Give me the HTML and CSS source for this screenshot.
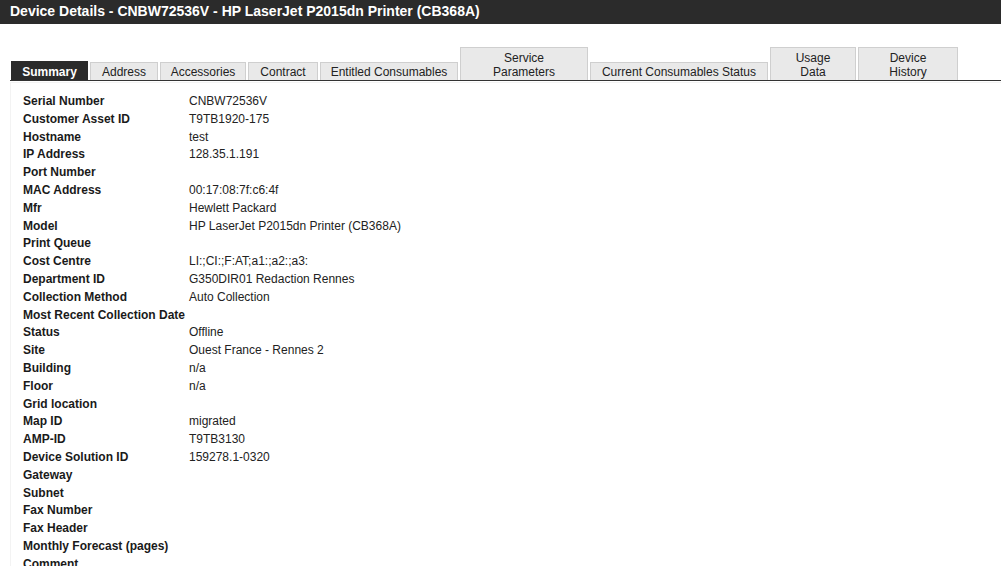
FILE: index.html
```html
<!DOCTYPE html>
<html>
<head>
<meta charset="utf-8">
<link rel="stylesheet" href="styles.css">
</head>
<body>
<div class="header">Device Details - CNBW72536V - HP LaserJet P2015dn Printer (CB368A)</div>
<div class="tabs">
  <div class="tab active w-summary">Summary</div>
  <div class="tab w-address">Address</div>
  <div class="tab w-accessories">Accessories</div>
  <div class="tab w-contract">Contract</div>
  <div class="tab w-entitled">Entitled Consumables</div>
  <div class="tab tall w-service">Service<br>Parameters</div>
  <div class="tab w-current">Current Consumables Status</div>
  <div class="tab tall w-usage">Usage<br>Data</div>
  <div class="tab tall w-history">Device<br>History</div>
</div>
<div class="panel">
  <div class="details">
    <div class="label">Serial Number</div><div class="value">CNBW72536V</div>
    <div class="label">Customer Asset ID</div><div class="value">T9TB1920-175</div>
    <div class="label">Hostname</div><div class="value">test</div>
    <div class="label">IP Address</div><div class="value">128.35.1.191</div>
    <div class="label">Port Number</div><div class="value"></div>
    <div class="label">MAC Address</div><div class="value">00:17:08:7f:c6:4f</div>
    <div class="label">Mfr</div><div class="value">Hewlett Packard</div>
    <div class="label">Model</div><div class="value">HP LaserJet P2015dn Printer (CB368A)</div>
    <div class="label">Print Queue</div><div class="value"></div>
    <div class="label">Cost Centre</div><div class="value">LI:;CI:;F:AT;a1:;a2:;a3:</div>
    <div class="label">Department ID</div><div class="value">G350DIR01 Redaction Rennes</div>
    <div class="label">Collection Method</div><div class="value">Auto Collection</div>
    <div class="label">Most Recent Collection Date</div><div class="value"></div>
    <div class="label">Status</div><div class="value">Offline</div>
    <div class="label">Site</div><div class="value">Ouest France - Rennes 2</div>
    <div class="label">Building</div><div class="value">n/a</div>
    <div class="label">Floor</div><div class="value">n/a</div>
    <div class="label">Grid location</div><div class="value"></div>
    <div class="label">Map ID</div><div class="value">migrated</div>
    <div class="label">AMP-ID</div><div class="value">T9TB3130</div>
    <div class="label">Device Solution ID</div><div class="value">159278.1-0320</div>
    <div class="label">Gateway</div><div class="value"></div>
    <div class="label">Subnet</div><div class="value"></div>
    <div class="label">Fax Number</div><div class="value"></div>
    <div class="label">Fax Header</div><div class="value"></div>
    <div class="label">Monthly Forecast (pages)</div><div class="value"></div>
    <div class="label">Comment</div><div class="value"></div>
  </div>
</div>
</body>
</html>
```
FILE: styles.css
```css
html, body {
  margin: 0;
  padding: 0;
  background: #ffffff;
  font-family: "Liberation Sans", Arial, sans-serif;
  color: #1a1a1a;
  overflow: hidden;
}
.header {
  height: 24px;
  background: #2b2b2b;
  color: #ffffff;
  font-weight: bold;
  font-size: 14px;
  line-height: 22px;
  padding-left: 10px;
  box-sizing: border-box;
}
.tabs {
  display: flex;
  align-items: flex-end;
  gap: 2px;
  margin: 23px 0 0 10px;
  padding-left: 1px;
  border-bottom: 1px solid #333333;
}
.tab {
  box-sizing: border-box;
  flex: none;
  background: #e9e9e9;
  border: 1px solid #cfcfcf;
  border-bottom: none;
  font-size: 12px;
  line-height: 14px;
  padding: 2px 0 1px;
  text-align: center;
  color: #222222;
  white-space: nowrap;
}
.tab.active {
  background: #2b2b2b;
  border-color: #2b2b2b;
  color: #ffffff;
  font-weight: bold;
  padding-top: 3px;
}
.tab.tall {
  padding-top: 3px;
}
.w-summary { width: 77px; }
.w-address { width: 68px; }
.w-accessories { width: 86px; }
.w-contract { width: 70px; }
.w-entitled { width: 138px; }
.w-service { width: 128px; }
.w-current { width: 178px; }
.w-usage { width: 86px; }
.w-history { width: 100px; }
.panel {
  margin: 1px 0 0 10px;
  border-left: 1px solid #f3f3f3;
  border-top: 1px solid #f3f3f3;
  padding: 10px 0 0 12px;
}
.details {
  display: grid;
  grid-template-columns: 166px auto;
  grid-auto-rows: 17.8px;
  font-size: 12px;
  line-height: 17.8px;
}
.label {
  font-weight: bold;
  color: #1a1a1a;
}
.value {
  color: #222222;
}
```
